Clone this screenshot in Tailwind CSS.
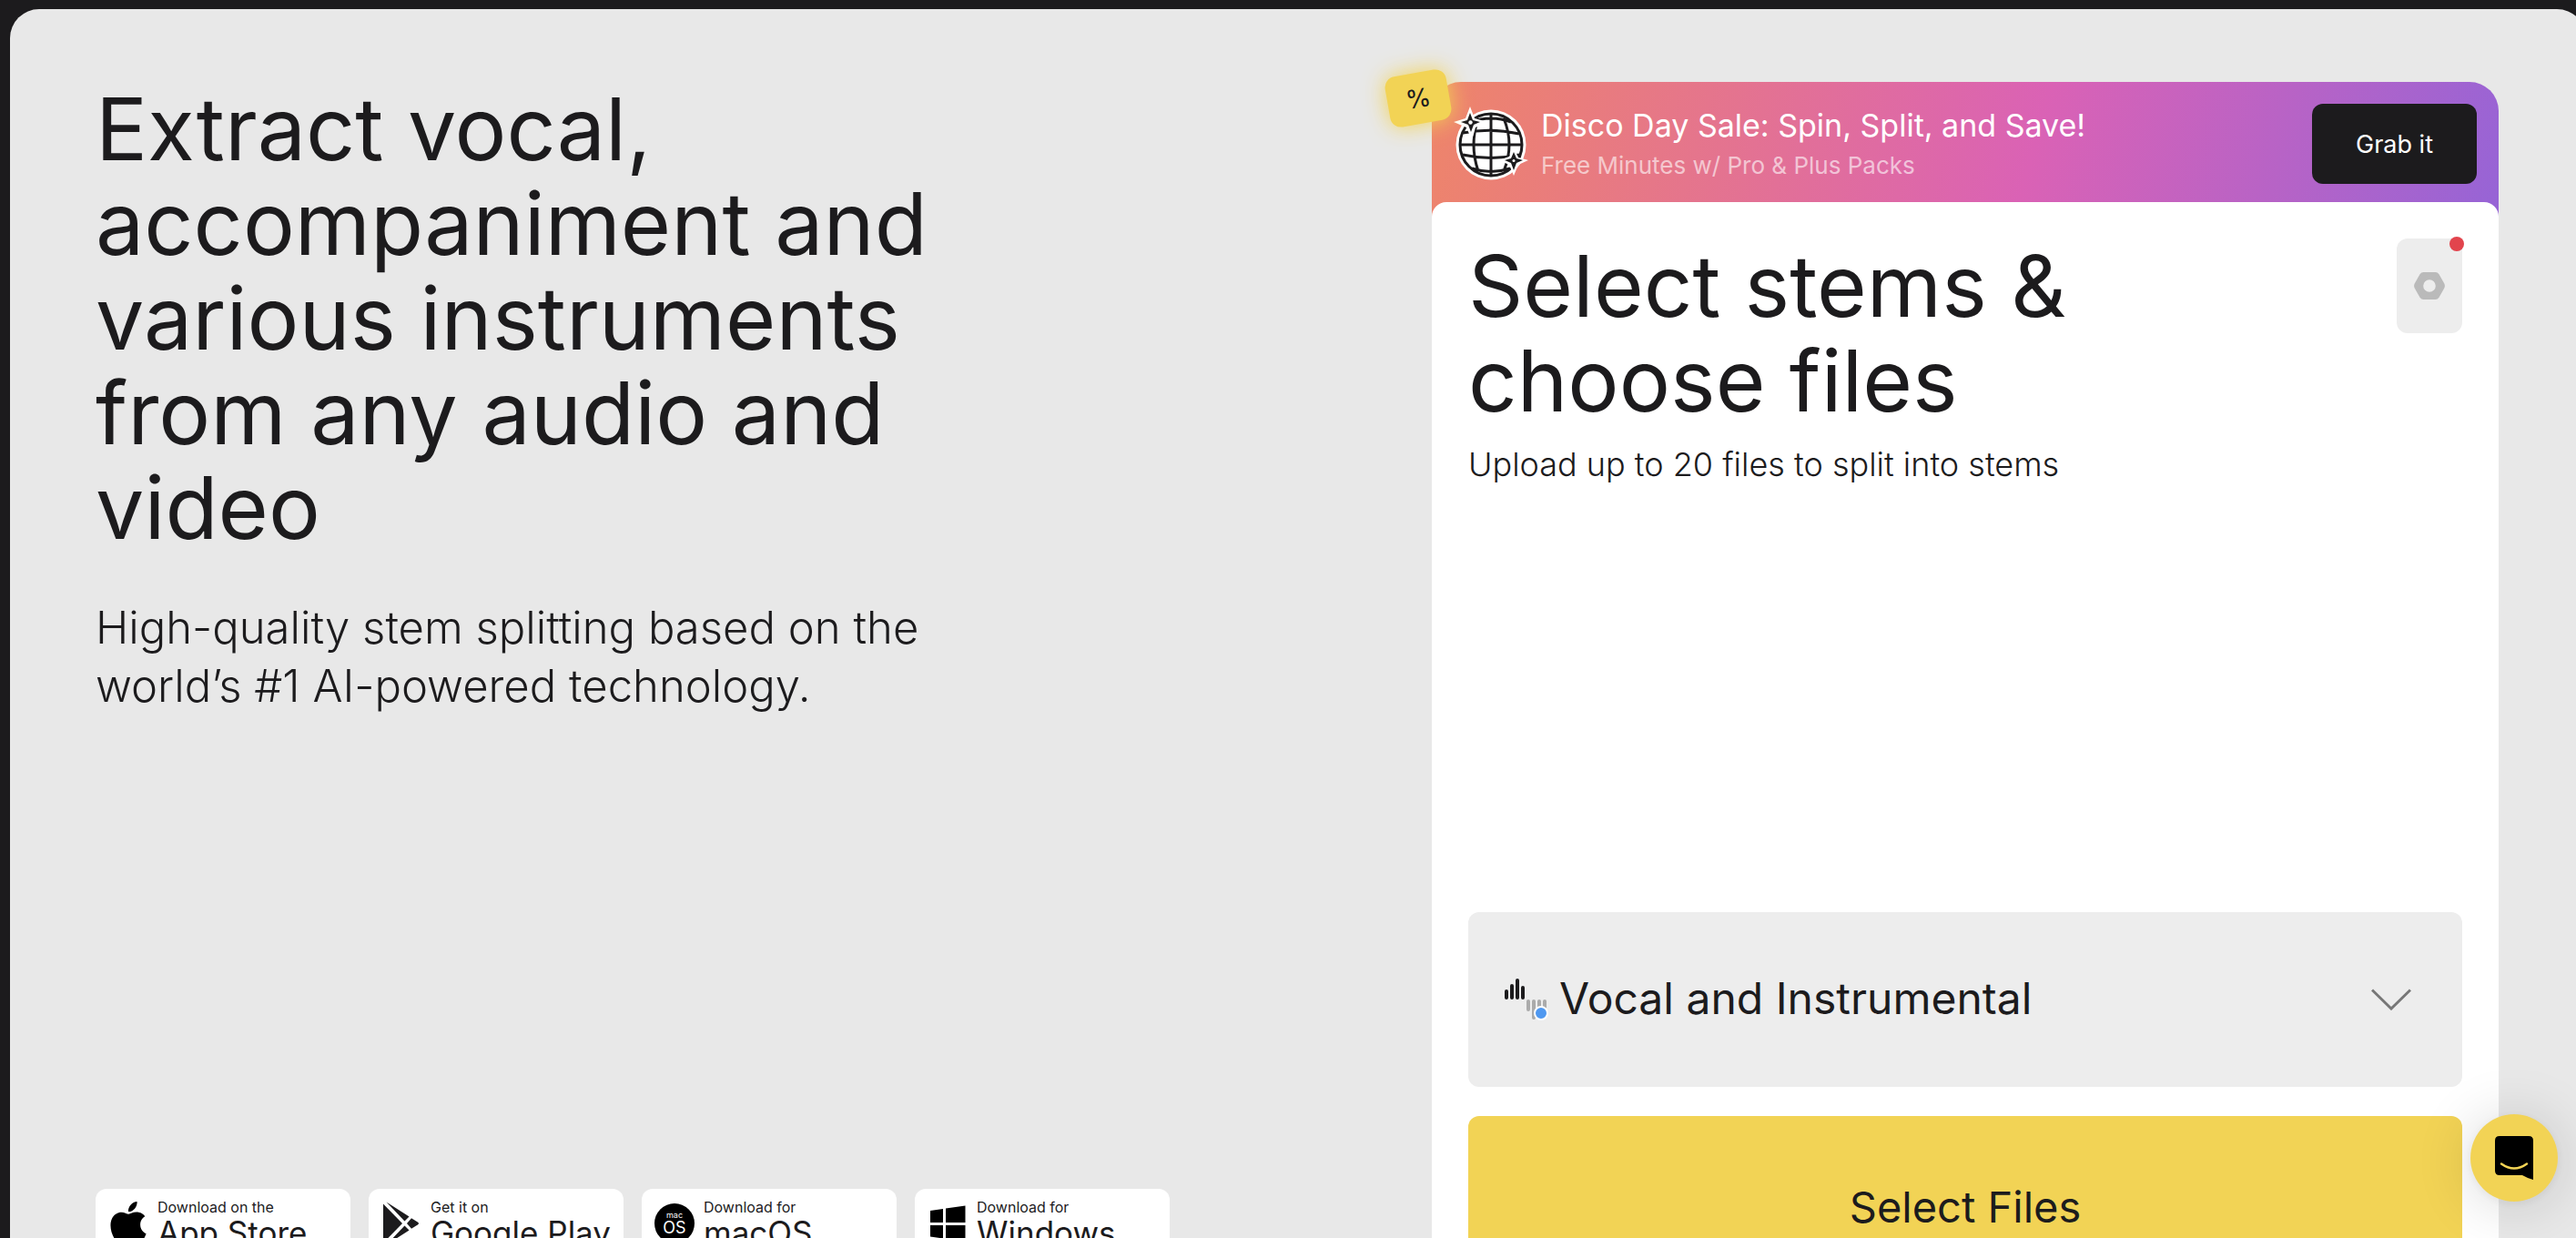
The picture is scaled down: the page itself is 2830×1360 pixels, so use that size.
<!DOCTYPE html>
<html lang="en">
<head>
<meta charset="utf-8">
<meta name="viewport" content="width=device-width, initial-scale=1">
<title>Stem Splitter</title>
<script src="https://cdn.jsdelivr.net/npm/@tailwindcss/browser@4"></script>
</head>
<body class="h-screen overflow-hidden bg-[#1c1b1d] font-['Inter',sans-serif] text-[#1c1b1d]">
<main class="mt-[10px] -mr-[11px] ml-[11px] flex items-stretch justify-between gap-16 rounded-t-[32px] bg-[#e8e8e8] px-[94px] pt-20 pr-[96px] pb-10">

  <section class="flex flex-col justify-between pb-[84px]">
    <div>
      <h1 class="max-w-[960px] text-[95px] leading-[104px]">Extract vocal, accompaniment and various instruments from any audio and video</h1>
      <p class="mt-12 max-w-[960px] text-[49px] leading-[64px] font-light">High-quality stem splitting based on the world’s #1 AI-powered technology.</p>
    </div>
    <nav aria-label="Downloads" class="flex gap-5">
      <a href="#" class="flex h-[76px] w-[280px] items-center gap-3 rounded-xl bg-white pl-4">
        <svg class="h-12 w-10 shrink-0" viewBox="2 0 20 24" aria-hidden="true"><path d="M12.152 6.896c-.948 0-2.415-1.078-3.96-1.04-2.04.027-3.91 1.183-4.961 3.014-2.117 3.675-.546 9.103 1.519 12.09 1.013 1.454 2.208 3.09 3.792 3.039 1.52-.065 2.09-.987 3.935-.987 1.831 0 2.35.987 3.96.948 1.637-.026 2.676-1.48 3.676-2.948 1.156-1.688 1.636-3.325 1.662-3.415-.039-.013-3.182-1.221-3.22-4.857-.026-3.04 2.48-4.494 2.597-4.559-1.429-2.09-3.623-2.324-4.39-2.376-2-.156-3.675 1.09-4.61 1.09zM15.53 3.83c.843-1.012 1.4-2.427 1.245-3.83-1.207.052-2.662.805-3.532 1.818-.78.896-1.454 2.338-1.273 3.714 1.338.104 2.715-.688 3.559-1.701"/></svg>
        <span class="flex flex-col pb-1"><span class="text-[16px] leading-6">Download on the</span><span class="text-[35px] leading-8">App Store</span></span>
      </a>
      <a href="#" class="flex h-[76px] w-[280px] items-center gap-3 rounded-xl bg-white pl-4">
        <svg class="h-12 w-10 shrink-0" viewBox="0 0 40 48" fill="#1c1b1d" aria-hidden="true"><path d="M0 2.500V45.500L21 24Z"/><path d="M3.500 .5 28.500 16.500 23.500 21.500Z"/><path d="M3.500 47.500 28.500 31.500 23.500 26.500Z"/><path d="M31 18.300 37.800 22.500Q40.200 24 37.800 25.500L31 29.700 26 24Z"/></svg>
        <span class="flex flex-col pb-1"><span class="text-[16px] leading-6">Get it on</span><span class="text-[35px] leading-8">Google Play</span></span>
      </a>
      <a href="#" class="flex h-[76px] w-[280px] items-center gap-[10px] rounded-xl bg-white pl-[14px]">
        <svg class="size-11 shrink-0" viewBox="0 0 44 44" aria-hidden="true"><circle cx="22" cy="22" r="22"/><text x="22" y="16" text-anchor="middle" font-size="9" fill="#fff">mac</text><text x="22" y="33" text-anchor="middle" font-size="18" fill="#fff">OS</text></svg>
        <span class="flex flex-col pb-1"><span class="text-[16px] leading-6">Download for</span><span class="text-[35px] leading-8">macOS</span></span>
      </a>
      <a href="#" class="flex h-[76px] w-[280px] items-center gap-3 rounded-xl bg-white pl-4">
        <svg class="size-10 shrink-0" viewBox="0 0 40 40" aria-hidden="true"><path d="M1 6 15 4V19H1ZM18 3.500 39.500 .5V19H18ZM1 22H15V36.500L1 34.500ZM18 22H39.500V40L18 37Z"/></svg>
        <span class="flex flex-col pb-1"><span class="text-[16px] leading-6">Download for</span><span class="text-[35px] leading-8">Windows</span></span>
      </a>
    </nav>
  </section>

  <section class="relative flex min-h-[1376px] w-[1172px] flex-col rounded-t-[32px] rounded-b-2xl bg-[linear-gradient(105deg,#ee856a_0%,#da62b5_56%,#9664d6_100%)] bg-[length:100%_160px] bg-no-repeat">
    <div class="absolute -top-[10px] -left-[49px] flex h-14 w-[68px] -rotate-10 items-center justify-center rounded-xl bg-[#f2d355] text-[28px] shadow-[0_0_24px_#f2d355]">%</div>
    <div class="flex h-[132px] items-center pr-6 pl-6 pt-2 pb-1">
      <svg class="size-[82px] shrink-0" viewBox="0 0 82 82" aria-hidden="true">
        <circle cx="41" cy="42" r="38.500" fill="#fff"/>
        <g fill="none" stroke="#1c1b1d" stroke-width="3"><circle cx="41" cy="42" r="34"/><path d="M41 8V76M7 42H75M19 17Q41 9 63 17M10 29Q41 23 72 30M10 53Q41 60 72 53M20 68Q41 75 62 68M27 13Q17 42 27 71M55 13Q67 42 55 71"/></g>
        <path d="M18 0 23 13 37 17 24 23 20 37 14 23 0 17 13 13Z" fill="#fff"/>
        <path d="M18 7 21 15 29 17 22 20 19 28 16 20 8 17 15 15Z" fill="#1c1b1d"/><circle cx="18.500" cy="17.500" r="2.200" fill="#fff"/>
        <path d="M66 45 71 56 82 59 71 64 66 76 61 64 50 59 61 55Z" fill="#fff"/>
        <path d="M66 50 69 57 76 59 69 62 66 70 63 62 56 59 63 57Z" fill="#1c1b1d"/><circle cx="66" cy="59.500" r="1.500" fill="#fff"/>
      </svg>
      <div class="ml-[14px] grow pt-1">
        <p class="text-[34px] leading-[44px] text-white">Disco Day Sale: Spin, Split, and Save!</p>
        <p class="text-[26px] leading-[44px] text-white/60">Free Minutes w/ Pro &amp; Plus Packs</p>
      </div>
      <button class="h-[88px] w-[181px] rounded-xl bg-[#1c1b1d] pt-[2px] text-[27px] text-white">Grab it</button>
    </div>
    <div class="flex grow flex-col rounded-2xl bg-white p-10">
      <div class="flex items-start justify-between">
        <h2 class="max-w-[720px] text-[94px] leading-[104px]">Select stems &amp; choose files</h2>
        <button aria-label="Settings" class="relative flex h-[104px] w-[72px] items-center justify-center rounded-xl bg-[#ededed]">
          <svg class="h-[30px] w-[34px]" viewBox="0 0 34 30" aria-hidden="true"><path fill="#bababa" fill-rule="evenodd" d="M10.500 0H23.500Q26 0 27.500 2.200L33.300 12.500Q34.500 15 33.300 17.500L27.500 27.800Q26 30 23.500 30H10.500Q8 30 6.500 27.800L.7 17.500Q-.5 15 .7 12.500L6.500 2.200Q8 0 10.500 0ZM17 8.200A6.800 6.800 0 1 0 17 21.800 6.800 6.800 0 1 0 17 8.200Z"/></svg>
          <span class="absolute -top-[2px] -right-[2px] size-4 rounded-full bg-[#e2444d]"></span>
        </button>
      </div>
      <p class="mt-4 text-[36px] leading-[48px] font-light">Upload up to 20 files to split into stems</p>
      <div class="mt-auto flex h-48 items-center rounded-xl bg-[#ededed] pr-14 pl-10">
        <svg class="h-[46px] w-12 shrink-0" viewBox="0 0 48 46" aria-hidden="true"><g stroke-width="4" stroke-linecap="round"><path stroke="#1c1b1d" d="M2 14V21M8 8V21M14 2V21M20 10V21"/><path stroke="#ababab" d="M26 25V34M32 25V43M38 25V40M44 25V36"/></g><circle cx="40" cy="38" r="7" fill="#4f98f0" stroke="#fff" stroke-width="2"/></svg>
        <label for="stems" class="sr-only">Stems</label>
        <select id="stems" class="ml-3 h-16 grow appearance-none bg-transparent pb-[2px] text-[48px] leading-[62px]"><option>Vocal and Instrumental</option></select>
        <svg class="h-6 w-11 shrink-0" viewBox="0 0 44 24" aria-hidden="true"><path d="M1 1.500 22 22 43 1.500" fill="none" stroke="#777" stroke-width="3"/></svg>
      </div>
      <button class="mt-8 h-[200px] shrink-0 rounded-xl bg-[#f2d355] text-[47px]">Select Files</button>
    </div>
  </section>
</main>

<button aria-label="Open chat" class="fixed right-5 bottom-10 flex size-24 items-center justify-center rounded-full bg-[#f2d355] shadow-[0_2px_12px_rgba(0,0,0,0.06),0_4px_64px_rgba(0,0,0,0.16)]">
  <svg class="h-12 w-[42px]" viewBox="0 0 42 48" aria-hidden="true"><path d="M5 0H37Q42 0 42 5V48Q35 46 30 43H5Q0 43 0 38V5Q0 0 5 0Z"/><path d="M7 30.500Q21 40.500 35 30.500" fill="none" stroke="#f2d355" stroke-width="2.500" stroke-linecap="round"/></svg>
</button>
</body>
</html>
